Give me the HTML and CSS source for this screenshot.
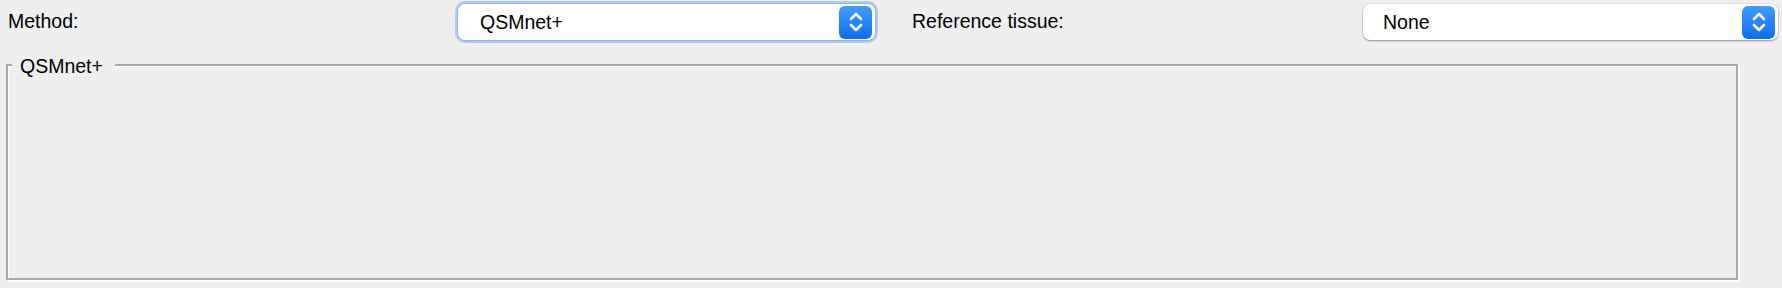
FILE: index.html
```html
<!DOCTYPE html>
<html>
<head>
<meta charset="utf-8">
<link rel="stylesheet" href="styles.css">
</head>
<body>
<div class="top-row">
  <div class="label label-method">Method:</div>
  <div class="combo-cell">
    <div class="combo combo-focused">
      <span class="combo-text">QSMnet+</span>
      <span class="stepper">
        <svg width="16" height="24" viewBox="0 0 16 24"><path d="M3 9 L8 4 L13 9" fill="none" stroke="#fff" stroke-width="2.6" stroke-linecap="round" stroke-linejoin="round"/><path d="M3 15 L8 20 L13 15" fill="none" stroke="#fff" stroke-width="2.6" stroke-linecap="round" stroke-linejoin="round"/></svg>
      </span>
    </div>
  </div>
  <div class="label label-ref">Reference tissue:</div>
  <div class="combo-cell">
    <div class="combo combo-plain">
      <span class="combo-text">None</span>
      <span class="stepper">
        <svg width="16" height="24" viewBox="0 0 16 24"><path d="M3 9 L8 4 L13 9" fill="none" stroke="#fff" stroke-width="2.6" stroke-linecap="round" stroke-linejoin="round"/><path d="M3 15 L8 20 L13 15" fill="none" stroke="#fff" stroke-width="2.6" stroke-linecap="round" stroke-linejoin="round"/></svg>
      </span>
    </div>
  </div>
</div>
<div class="frame">
  <div class="frame-title">QSMnet+</div>
</div>
</body>
</html>
```
FILE: styles.css
```css
html, body {
  margin: 0;
  padding: 0;
  background: #efefef;
  width: 1782px;
  height: 288px;
  overflow: hidden;
  font-family: "Liberation Sans", Arial, sans-serif;
  font-size: 19.5px;
  color: #000;
}

.top-row {
  display: grid;
  grid-template-columns: 450px 454px 451px 417px;
  height: 64px;
  padding-left: 8px;
  box-sizing: border-box;
}

.label {
  padding-top: 9px;
  line-height: 24px;
  white-space: nowrap;
}

.combo-cell {
  padding-top: 4px;
}

.combo {
  position: relative;
  display: flex;
  align-items: center;
  justify-content: space-between;
  height: 36px;
  background: #fff;
  border-radius: 7px;
  box-sizing: border-box;
}

.combo-focused {
  width: 417px;
  box-shadow: 0 0 0 1px #8fb8ea, 0 0 0 3px rgba(128, 176, 234, 0.55);
  padding-left: 22px;
}

.combo-plain {
  width: 415px;
  box-shadow: 0 0 0 0.5px rgba(0, 0, 0, 0.12), 0 1px 2px rgba(0, 0, 0, 0.35);
  padding-left: 20px;
}

.combo-text {
  line-height: 36px;
}

.stepper {
  width: 33px;
  height: 33px;
  margin-right: 3px;
  border-radius: 6px;
  background: linear-gradient(#3f9dfd, #0b6df2);
  display: flex;
  align-items: center;
  justify-content: center;
}

.frame {
  position: relative;
  margin-left: 6px;
  width: 1732px;
  height: 216px;
  box-sizing: border-box;
  border: 2px solid #aaaaaa;
  box-shadow: inset 1px 1px 0 #fff, 2px 2px 0 #fff;
}

.frame-title {
  position: absolute;
  left: 4px;
  top: -10px;
  padding: 0 12px 0 8px;
  line-height: 20px;
  background: #efefef;
}
```
